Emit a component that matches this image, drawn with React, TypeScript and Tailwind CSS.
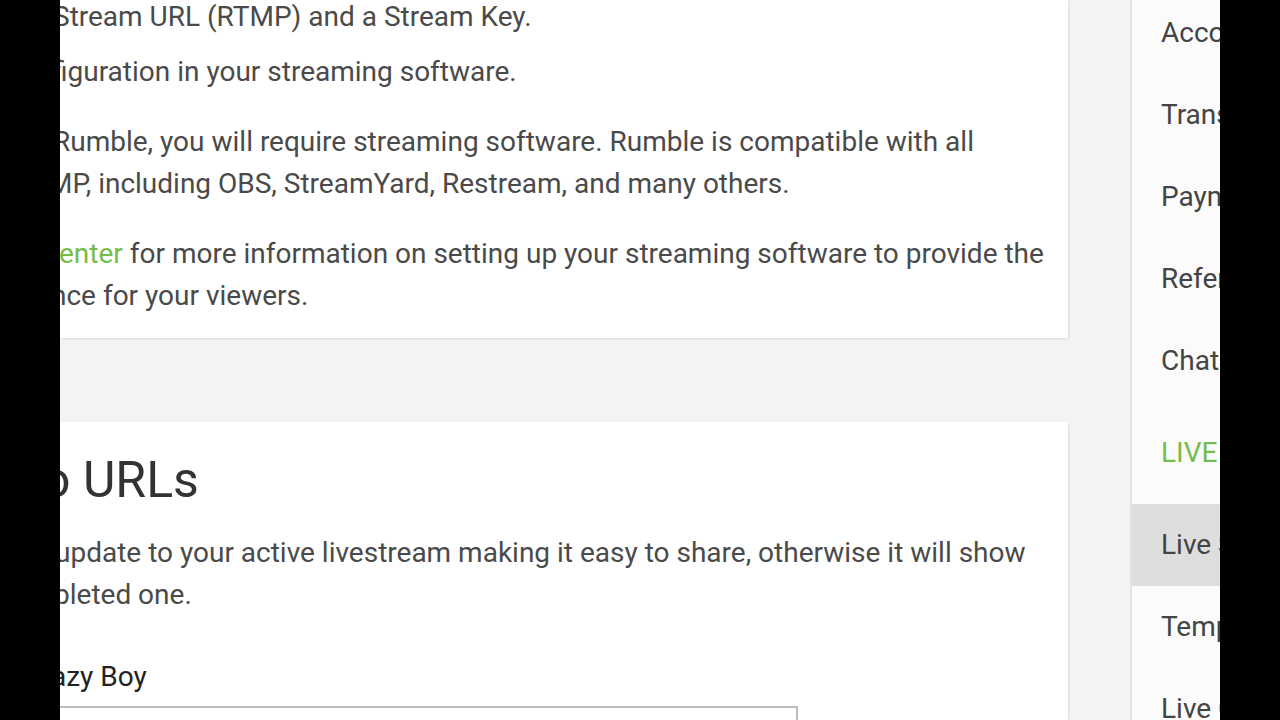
const font = { fontFamily: "Roboto, 'Liberation Sans', sans-serif" };

const sideItems = [
  { label: "Account", kind: "item" },
  { label: "Transactions", kind: "item" },
  { label: "Payments", kind: "item" },
  { label: "Referrals", kind: "item" },
  { label: "Chat", kind: "item" },
  { label: "LIVE STREAMING", kind: "header" },
  { label: "Live Stream Setup", kind: "active" },
  { label: "Templates", kind: "item" },
  { label: "Live Chat", kind: "item" },
];

function Sidebar() {
  return (
    <aside className="w-[90px] shrink-0 overflow-hidden border-l-2 border-[#e3e3e3] bg-[#fbfbfb]">
      <div className="mt-[-8px] flex flex-col">
        {sideItems.map((item) => {
          if (item.kind === "header") {
            return (
              <div key={item.label} className="flex h-[102px] items-center whitespace-nowrap pl-[29px] text-[28px] text-[#75bd4a]">
                {item.label}
              </div>
            );
          }
          return (
            <div
              key={item.label}
              className={
                item.kind === "active"
                  ? "flex h-[82px] items-center whitespace-nowrap bg-[#dedede] pl-[29px] text-[28px] text-[#444]"
                  : "flex h-[82px] items-center whitespace-nowrap pl-[29px] text-[28px] text-[#444]"
              }
            >
              {item.label}
            </div>
          );
        })}
      </div>
    </aside>
  );
}

export default function App() {
  return (
    <div className="flex h-[720px] w-[1280px] overflow-hidden bg-black" style={font}>
      <div className="w-[60px] shrink-0 bg-black" />

      <div className="flex w-[1160px] shrink-0 overflow-hidden bg-[#f2f3f5]">
        {/* Main column */}
        <main className="flex w-[1008px] shrink-0 flex-col gap-[84px]">
          {/* Stream setup card */}
          <section className="h-[338px] shrink-0 overflow-hidden bg-white text-[28px] leading-[42px] text-[#4a4a4a] shadow-[1px_1px_2px_rgba(0,0,0,0.10)]">
            <div className="mt-[-4px] ml-[-7px] whitespace-nowrap">Stream URL (RTMP) and a Stream Key.</div>
            <div className="mt-[13px] ml-[-8px] whitespace-nowrap">figuration in your streaming software.</div>
            <div className="mt-[28px]">
              <div className="ml-[-7px] whitespace-nowrap">
                Rumble, you will require streaming software. Rumble is compatible with all
              </div>
              <div className="ml-[-12px] whitespace-nowrap">
                MP, including OBS, StreamYard, Restream, and many others.
              </div>
            </div>
            <div className="mt-[28px]">
              <div className="ml-[-1px] whitespace-nowrap">
                <span className="text-[#75bd4a]">enter</span> for more information on setting up your streaming software to provide the
              </div>
              <div className="ml-[-9px] whitespace-nowrap">nce for your viewers.</div>
            </div>
          </section>

          {/* Video URLs card */}
          <section className="flex-1 overflow-hidden bg-white pt-[30px] shadow-[1px_1px_2px_rgba(0,0,0,0.10)]">
            <h2 className="ml-[-18px] whitespace-nowrap text-[50px] leading-[56px] font-normal text-[#333]">o URLs</h2>
            <div className="mt-[24px] text-[28px] leading-[42px] text-[#4a4a4a]">
              <div className="ml-[-5px] whitespace-nowrap">
                update to your active livestream making it easy to share, otherwise it will show
              </div>
              <div className="ml-[-6px] whitespace-nowrap">pleted one.</div>
            </div>
            <div className="mt-[40px] ml-[-9px] whitespace-nowrap text-[28px] leading-[42px] text-[#222]">azy Boy</div>
            <div className="mt-[8px] ml-[-20px] h-[44px] w-[758px] border-2 border-[#bdbdbd] bg-white" />
          </section>
        </main>

        <div className="w-[62px] shrink-0" />
        <Sidebar />
      </div>

      <div className="w-[60px] shrink-0 bg-black" />
    </div>
  );
}
